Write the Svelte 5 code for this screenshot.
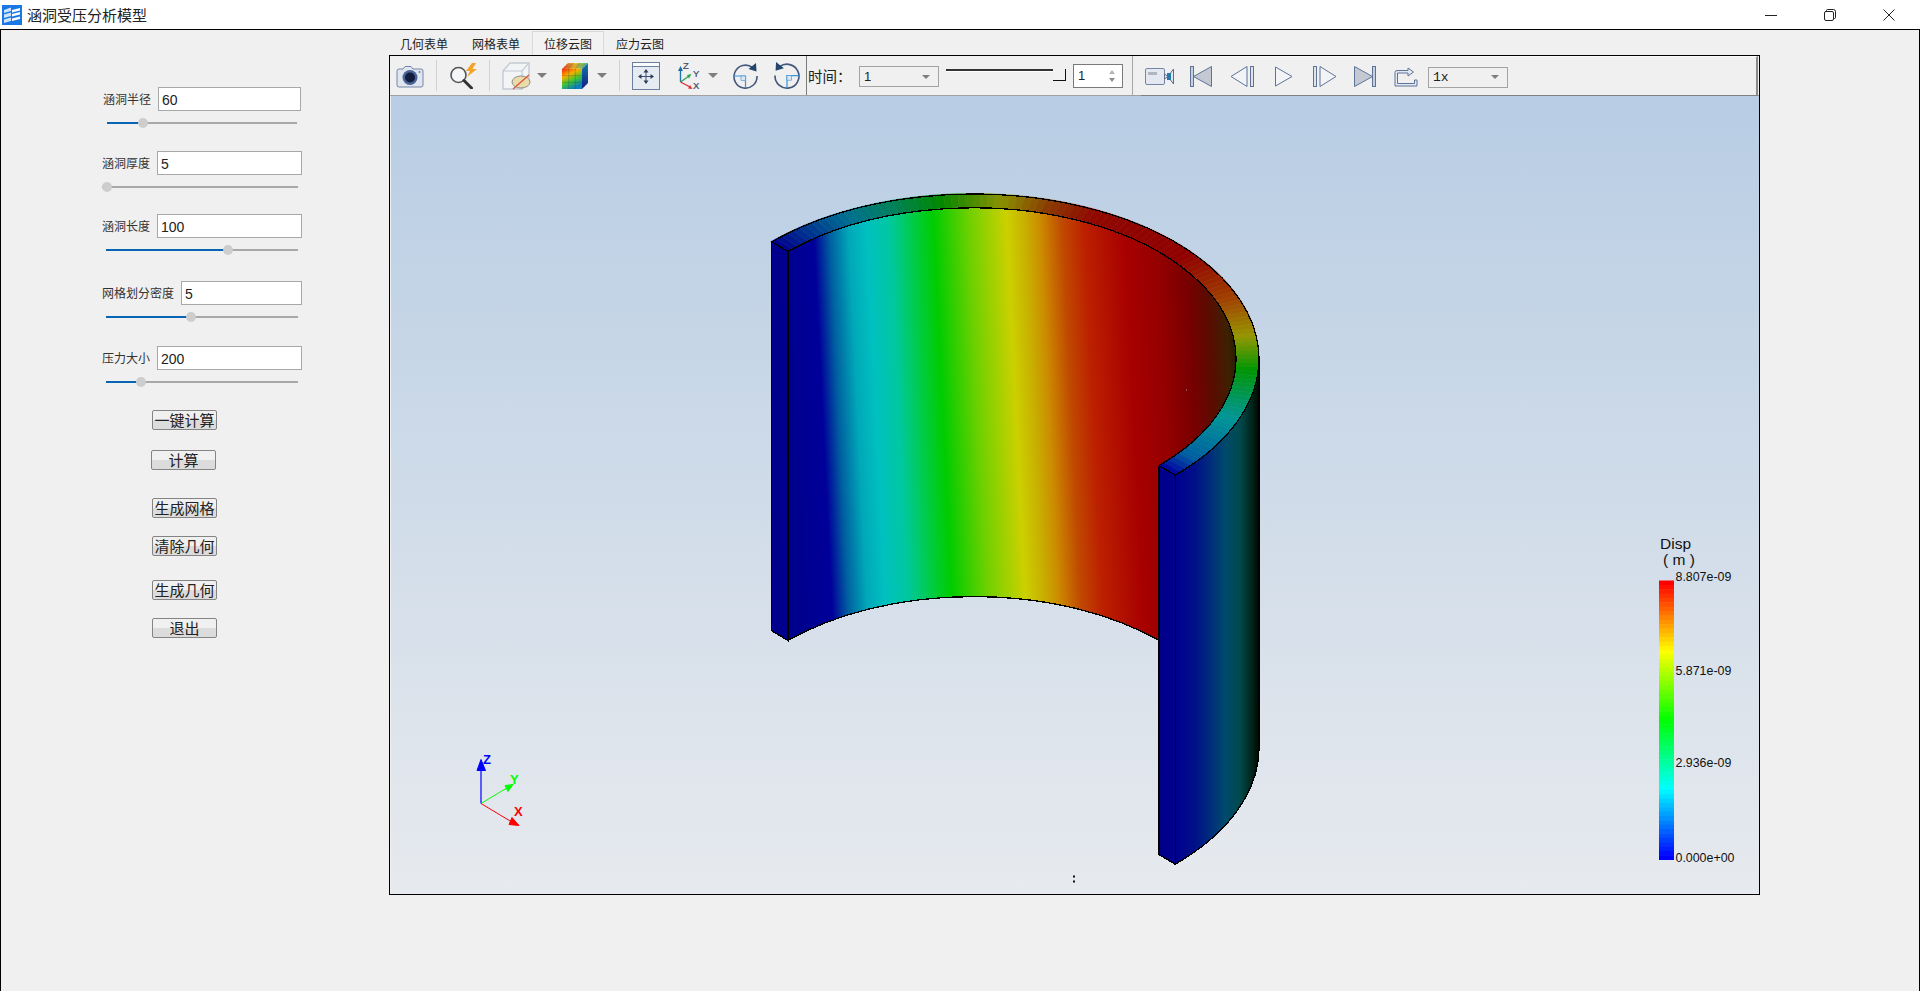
<script lang="ts">
    const fields = [
        { id: 'f1', label: '涵洞半径', value: '60', pct: 18.9 },
        { id: 'f2', label: '涵洞厚度', value: '5', pct: 2.55 },
        { id: 'f3', label: '涵洞长度', value: '100', pct: 63.5 },
        { id: 'f4', label: '网格划分密度', value: '5', pct: 44.3 },
        { id: 'f5', label: '压力大小', value: '200', pct: 18.2 }
    ]

    const buttons = [
        { id: 'b1', text: '一键计算' },
        { id: 'b2', text: '计算' },
        { id: 'b3', text: '生成网格' },
        { id: 'b4', text: '清除几何' },
        { id: 'b5', text: '生成几何' },
        { id: 'b6', text: '退出' }
    ]

    const tabs = ['几何表单', '网格表单', '位移云图', '应力云图']
    const activeTab = 2

    // model geometry, in page coordinates (the scene's viewBox starts at the viewport's corner)
    const cx = 973
    const cy = 358
    const outer = { a: 286, b: 165 }
    const inner = { a: 263, b: 151 }
    const H = 389

    // colour of the top ring against the ellipse angle
    const ringStops: [number, number[]][] = [
        [225, [0, 0, 140]],
        [235, [0, 63, 144]],
        [243, [0, 112, 144]],
        [253, [0, 128, 90]],
        [263, [0, 136, 0]],
        [276, [138, 144, 0]],
        [286, [138, 58, 0]],
        [296, [144, 8, 0]],
        [320, [144, 0, 0]],
        [338, [160, 64, 0]],
        [352, [150, 150, 0]],
        [364, [0, 150, 0]],
        [375, [0, 150, 96]],
        [382, [0, 150, 150]],
        [398, [0, 96, 160]],
        [405, [0, 0, 160]]
    ]

    function ringColor(t: number) {
        for (let i = 1; i < ringStops.length; i++) {
            const [t0, c0] = ringStops[i - 1]
            const [t1, c1] = ringStops[i]
            if (t <= t1) {
                const k = (t - t0) / (t1 - t0)
                return `rgb(${c0.map((v, j) => Math.round(v + (c1[j] - v) * k)).join(',')})`
            }
        }
        return 'rgb(0,0,160)'
    }

    function pt(e: { a: number; b: number }, t: number) {
        const r = (t * Math.PI) / 180
        return `${(cx + e.a * Math.cos(r)).toFixed(1)},${(cy + e.b * Math.sin(r)).toFixed(1)}`
    }

    const ringSegments: { points: string; color: string }[] = []
    for (let t = 225; t < 405; t += 1.5) {
        ringSegments.push({
            points: [pt(outer, t), pt(outer, t + 1.5), pt(inner, t + 1.5), pt(inner, t)].join(' '),
            color: ringColor(t + 0.75)
        })
    }

    // wall colours are keyed by screen x
    const wallStops: [number, string][] = [
        [788, '#00008f'],
        [817, '#00009a'],
        [833, '#0060a0'],
        [852, '#00a8b8'],
        [870, '#00c0c0'],
        [893, '#00c8a0'],
        [918, '#00cc40'],
        [937, '#00cc00'],
        [973, '#70d000'],
        [1010, '#ccd000'],
        [1028, '#c8b000'],
        [1043, '#cc8c00'],
        [1065, '#c04a00'],
        [1087, '#bc2000'],
        [1127, '#a80000'],
        [1160, '#940000'],
        [1187, '#780000'],
        [1207, '#5a0c00'],
        [1225, '#3c2200'],
        [1236, '#201a08']
    ]
    const outerStops: [number, string][] = [
        [1175, '#00008f'],
        [1195, '#001088'],
        [1210, '#002c7c'],
        [1225, '#004a6c'],
        [1240, '#004a4c'],
        [1252, '#00241a'],
        [1259, '#000800']
    ]
    const offset = (x: number, x0: number, x1: number) => ((x - x0) / (x1 - x0)).toFixed(4)

    // colour bar: 64 steps from red at the top down to blue
    const barTop = 580
    const barHeight = 279
    const bands = Array.from({ length: 64 }, (_, i) => ({
        y: barTop + (i * barHeight) / 64,
        color: `hsl(${(i / 63) * 240}, 100%, 50%)`
    }))
    const barLabels = [
        { y: 580, text: '8.807e-09' },
        { y: 674, text: '5.871e-09' },
        { y: 766, text: '2.936e-09' },
        { y: 861, text: '0.000e+00' }
    ]

    const outerBottomY = cy + H
</script>

<div class="app">
    <header class="titlebar">
        <svg class="app-icon" viewBox="0 0 20 20">
            <rect width="20" height="20" fill="#1a78e6" />
            <path d="M2 5 L9 2.5 V6 L2 8 Z M2 9.5 L9 7.5 V11 L2 13 Z M2 14.5 L9 12.5 V16 L2 18 Z" fill="#cfe3fa" />
            <path d="M10 5 L18 3 V5.5 L10 7.5 Z M10 9 L18 7 V9.5 L10 11.5 Z M10 13.5 L18 11.5 V14 L10 16 Z" fill="#fff" />
        </svg>
        <span class="title">涵洞受压分析模型</span>
        <div class="win-controls">
            <svg viewBox="0 0 12 12"><path d="M0 6.5 H12" stroke="#222" fill="none" /></svg>
            <svg viewBox="0 0 12 12"><path d="M2.5 2.5 V1.5 Q2.5 .5 3.5 .5 H9.5 Q11.5 .5 11.5 2.5 V8.5 Q11.5 9.5 10.5 9.5 H9.5 M1.5 2.5 H8 Q9.5 2.5 9.5 4 V10 Q9.5 11.5 8 11.5 H2 Q.5 11.5 .5 10 V4 Q.5 2.5 2 2.5 Z" stroke="#222" fill="none" /></svg>
            <svg viewBox="0 0 12 12"><path d="M.5 .5 L11.5 11.5 M11.5 .5 L.5 11.5" stroke="#222" fill="none" /></svg>
        </div>
    </header>

    <div class="body">
        <aside class="side">
            {#each fields as f}
                <div class="field {f.id}">
                    <div class="field-row">
                        <label for={f.id}>{f.label}</label>
                        <input id={f.id} value={f.value} />
                    </div>
                    <div class="slider">
                        <div class="fill" style="width: {f.pct}%"></div>
                        <div class="thumb" style="left: {f.pct}%"></div>
                    </div>
                </div>
            {/each}
            <div class="buttons">
                {#each buttons as b}
                    <button class={b.id}>{b.text}</button>
                {/each}
            </div>
        </aside>

        <main class="main">
            <nav class="tabs">
                {#each tabs as t, i}
                    <span class="tab" class:active={i === activeTab}>{t}</span>
                {/each}
            </nav>

            <section class="frame">
                <div class="toolbar">
                    <!-- camera -->
                    <svg class="ic w28" viewBox="0 0 28 24">
                        <path d="M3 5 H7 L9 2.5 H15 L17 5 H25 Q27 5 27 7 V21 Q27 23 25 23 H3 Q1 23 1 21 V7 Q1 5 3 5 Z" fill="#dfe6f0" stroke="#7486a8" />
                        <circle cx="14" cy="13.5" r="7.5" fill="#4a6494" />
                        <circle cx="14" cy="13.5" r="5" fill="#121d3e" />
                        <circle cx="23.5" cy="8" r="1" fill="#6a7c9e" />
                    </svg>
                    <i class="sep ml12"></i>
                    <!-- magnifier with flash -->
                    <svg class="ic w29 ml12" viewBox="0 0 29 27">
                        <circle cx="9.5" cy="13" r="7.5" fill="#f4f6f8" stroke="#555" stroke-width="1.6" />
                        <path d="M15 18.5 L22.5 26" stroke="#333" stroke-width="3" stroke-linecap="round" />
                        <path d="M23 1 L17 9 L21 9 L18 15 L28 7 L23.5 7 L27 1 Z" fill="#f0a428" />
                    </svg>
                    <i class="sep ml11"></i>
                    <!-- box with clipped ellipse -->
                    <svg class="ic w29 ml12" viewBox="0 0 29 28">
                        <path d="M1 9 L8 1 H27 V18 L20 27 H1 Z" fill="#f3f4f6" stroke="#c4cad3" stroke-width="1.4" />
                        <path d="M1 9 H20 L27 1 M20 9 V27" fill="none" stroke="#c4cad3" stroke-width="1.2" />
                        <ellipse cx="19" cy="20" rx="9" ry="6" fill="#e9dca8" stroke="#8d8d8d" />
                        <path d="M11 27 L27 13" stroke="#d9583a" stroke-width="1.4" />
                    </svg>
                    <svg class="arrow ml6" viewBox="0 0 10 5"><path d="M0 0 H10 L5 5 Z" /></svg>
                    <!-- colour cube -->
                    <svg class="ic w27 ml14" viewBox="0 0 27 28">
                        <defs>
                            <linearGradient id="cubeFront" x1="0" y1="0" x2="0.5" y2="1">
                                <stop offset="0" stop-color="#f02810" />
                                <stop offset=".35" stop-color="#f8b000" />
                                <stop offset=".65" stop-color="#40c830" />
                                <stop offset="1" stop-color="#0c80b8" />
                            </linearGradient>
                            <linearGradient id="cubeTop" x1="0" y1="0" x2="1" y2="0">
                                <stop offset="0" stop-color="#f04020" />
                                <stop offset=".5" stop-color="#f0c030" />
                                <stop offset="1" stop-color="#38c090" />
                            </linearGradient>
                            <linearGradient id="cubeSide" x1="0" y1="0" x2="0" y2="1">
                                <stop offset="0" stop-color="#1080c0" />
                                <stop offset="1" stop-color="#0a1c88" />
                            </linearGradient>
                        </defs>
                        <path d="M1 7 L7 1 H27 L21 7 Z" fill="url(#cubeTop)" />
                        <rect x="1" y="7" width="20" height="20" fill="url(#cubeFront)" />
                        <path d="M21 7 L27 1 V21 L21 27 Z" fill="url(#cubeSide)" />
                        <path d="M7.7 7 V27 M14.3 7 V27 M1 13.7 H21 M1 20.3 H21 M7 7 L12 1 M14 7 L19 1 M3 5 H23 M5 3 H25 M23 5 V25 M25 3 V23" stroke="#303030" stroke-opacity=".35" stroke-width=".7" fill="none" />
                    </svg>
                    <svg class="arrow ml9" viewBox="0 0 10 5"><path d="M0 0 H10 L5 5 Z" /></svg>
                    <i class="sep ml12"></i>
                    <!-- fit view -->
                    <svg class="ic w28 ml12" viewBox="0 0 28 28">
                        <rect x=".5" y=".5" width="27" height="27" fill="#e6ebf2" stroke="#6c7fa0" />
                        <rect x=".5" y=".5" width="27" height="4" fill="#fafbfc" stroke="#6c7fa0" />
                        <path d="M14 8 V21 M7.5 14.5 H20.5" stroke="#3d4f70" />
                        <path d="M14 7 L11.5 10.5 H16.5 Z M14 22 L11.5 18.5 H16.5 Z M6 14.5 L9.5 12 V17 Z M22 14.5 L18.5 12 V17 Z" fill="#2c3c5c" />
                    </svg>
                    <!-- axes -->
                    <svg class="ic w22 ml18" viewBox="0 0 22 30">
                        <path d="M2.5 21 V9" stroke="#1f7aa8" stroke-width="1.4" />
                        <path d="M2.5 21 L11 15" stroke="#2aa850" stroke-width="1.4" />
                        <path d="M2.5 21 L12 26" stroke="#e03030" stroke-width="1.4" />
                        <path d="M2.5 5 L0 10 H5 Z" fill="#1f6aa8" />
                        <path d="M13.5 13 L9 14 L11 17.5 Z" fill="#2aa850" />
                        <path d="M14.5 28 L10 27.5 L12 24 Z" fill="#e03030" />
                        <text class="axis-text" x="5" y="7.5">Z</text>
                        <text class="axis-text" x="15" y="15.5">Y</text>
                        <text class="axis-text" x="15" y="28">X</text>
                    </svg>
                    <svg class="arrow ml8" viewBox="0 0 10 5"><path d="M0 0 H10 L5 5 Z" /></svg>
                    <!-- rotate clockwise -->
                    <svg class="ic w25 ml15" viewBox="0 0 25 26">
                        <path d="M19.5 4.5 A11.5 11.5 0 1 0 24 13" fill="none" stroke="#44597c" stroke-width="1.6" />
                        <path d="M1 13 H12.5 V25" fill="none" stroke="#3a94d8" stroke-width="1.2" />
                        <rect x="8" y="13" width="4.5" height="4.5" fill="#dbe7f3" stroke="#3a94d8" stroke-width=".6" />
                        <path d="M23 0 L23.5 8.5 L15.5 6 Z" fill="#24466e" />
                    </svg>
                    <!-- rotate counter clockwise -->
                    <svg class="ic w26 ml16" viewBox="0 0 25 26">
                        <path d="M5.5 4.5 A11.5 11.5 0 1 1 1 13" fill="none" stroke="#44597c" stroke-width="1.6" />
                        <path d="M24 13 H12.5 V25" fill="none" stroke="#3a94d8" stroke-width="1.2" />
                        <rect x="12.5" y="13" width="4.5" height="4.5" fill="#dbe7f3" stroke="#3a94d8" stroke-width=".6" />
                        <path d="M2 0 L1.5 8.5 L9.5 6 Z" fill="#24466e" />
                    </svg>
                    <i class="sep dark ml6"></i>
                    <span class="time-label">时间：</span>
                    <div class="combo wide"><span>1</span><svg class="arrow small" viewBox="0 0 10 5"><path d="M0 0 H10 L5 5 Z" /></svg></div>
                    <div class="time-slider"><div class="time-handle"></div></div>
                    <div class="spin">
                        <span>1</span>
                        <svg viewBox="0 0 6 14"><path d="M0 5 L3 1 L6 5 Z" fill="#b4b4b4" /><path d="M0 9 H6 L3 13 Z" fill="#8c8c8c" /></svg>
                    </div>
                    <i class="sep grey ml9"></i>
                    <div class="player">
                        <!-- video camera -->
                        <svg class="w29" viewBox="0 0 29 17">
                            <rect x=".5" y=".5" width="19" height="16" rx="1.5" fill="#e4e9f1" stroke="#7486a8" />
                            <rect x="3" y="4" width="9" height="3" fill="#b0b6c0" />
                            <path d="M19.5 6 L23 8.5 L19.5 11 Z M28.5 1 L23 8.5 L28.5 16 Z" fill="#dfe6ee" stroke="#5a6f92" />
                            <path d="M22 5 H26 V12 H22 Z" fill="#2a78a8" />
                        </svg>
                        <!-- first -->
                        <svg class="w22 ml16" viewBox="0 0 22 21">
                            <rect x=".5" y=".5" width="3" height="20" fill="#c8d0dd" stroke="#5e7398" />
                            <path d="M3.5 10.5 L21.5 .5 V20.5 Z" fill="#c4c9d1" stroke="#5e7398" />
                        </svg>
                        <!-- previous -->
                        <svg class="w24 ml18" viewBox="0 0 24 21">
                            <path d="M1 10.5 L17 .5 V20.5 Z" fill="#f2f4f7" stroke="#5e7398" />
                            <rect x="20.5" y=".5" width="3" height="20" fill="#dfe4ec" stroke="#5e7398" />
                        </svg>
                        <!-- play -->
                        <svg class="w18 ml21" viewBox="0 0 18 21">
                            <path d="M.5 1 L17 10.5 L.5 20 Z" fill="#f2f4f7" stroke="#5e7398" />
                        </svg>
                        <!-- next -->
                        <svg class="w24 ml20" viewBox="0 0 24 21">
                            <rect x=".5" y=".5" width="3" height="20" fill="#dfe4ec" stroke="#5e7398" />
                            <path d="M7 .5 L23 10.5 L7 20.5 Z" fill="#f2f4f7" stroke="#5e7398" />
                        </svg>
                        <!-- last -->
                        <svg class="w22 ml17" viewBox="0 0 22 21">
                            <path d="M.5 .5 L18.5 10.5 L.5 20.5 Z" fill="#c4c9d1" stroke="#5e7398" />
                            <rect x="18.5" y=".5" width="3" height="20" fill="#c8d0dd" stroke="#5e7398" />
                        </svg>
                        <!-- export -->
                        <svg class="w24 ml18" viewBox="0 0 24 21">
                            <path d="M14 2 V4.5 H3 Q1 4.5 1 6.5 V20 H23 V14 H20.5 V17.5 H3.5 V7 H14 V10 L19.5 6 Z" fill="#e4e9f1" stroke="#5e7398" />
                        </svg>
                        <div class="combo wide ml10 mono"><span>1x</span><svg class="arrow small" viewBox="0 0 10 5"><path d="M0 0 H10 L5 5 Z" /></svg></div>
                    </div>
                </div>

                <div class="viewport">
                    <svg class="scene" viewBox="391 96 1368 797">
                        <defs>
                            <linearGradient id="wall" gradientUnits="userSpaceOnUse" x1="788" y1="300" x2="1236" y2="278">
                                {#each wallStops as [x, c]}
                                    <stop offset={offset(x, 788, 1236)} stop-color={c} />
                                {/each}
                            </linearGradient>
                            <linearGradient id="outerWall" gradientUnits="userSpaceOnUse" x1="1175" y1="0" x2="1259" y2="0">
                                {#each outerStops as [x, c]}
                                    <stop offset={offset(x, 1175, 1259)} stop-color={c} />
                                {/each}
                            </linearGradient>
                        </defs>

                        <!-- model -->
                        <path
                            d="M788 251 A{inner.a} {inner.b} 0 0 1 1236 {cy} A{inner.a} {inner.b} 0 0 1 1159 465 V640 A{inner.a} {inner.b} 0 0 0 788 640 Z"
                            fill="url(#wall)"
                        />
                        <path
                            d="M1175.2 474.7 A{outer.a} {outer.b} 0 0 0 1259 {cy} V{outerBottomY} A{outer.a} {outer.b} 0 0 1 1175.2 863.7 Z"
                            fill="url(#outerWall)"
                        />
                        <path d="M771.8 241.3 L788 251 V640 L771.8 630.3 Z" fill="#00008c" />
                        <path d="M1159 465 L1175.2 474.7 V863.7 L1159 854 Z" fill="#00008c" />
                        {#each ringSegments as s}
                            <polygon points={s.points} fill={s.color} stroke={s.color} stroke-width=".6" />
                        {/each}

                        <g class="edges">
                            <path d="M771.8 241.3 A{outer.a} {outer.b} 0 0 1 1259 {cy} A{outer.a} {outer.b} 0 0 1 1175.2 474.7 L1159 465" />
                            <path d="M788 251 A{inner.a} {inner.b} 0 0 1 1236 {cy} A{inner.a} {inner.b} 0 0 1 1159 465" />
                            <path d="M771.8 241.3 L788 251 V640 L771.8 630.3 Z" />
                            <path d="M1159 465 V854 L1175.2 863.7 V474.7" />
                            <path d="M1159 640 A{inner.a} {inner.b} 0 0 0 788 640" />
                            <path d="M1259 {cy} V{outerBottomY} A{outer.a} {outer.b} 0 0 1 1175.2 863.7" />
                        </g>
                        <rect x="1186" y="389" width="1" height="1" fill="#9a9a9a" />

                        <!-- orientation triad -->
                        <path d="M481 803 V769" stroke="#0000ff" stroke-width="1.2" />
                        <path d="M481 803 L506 788" stroke="#00ff00" />
                        <path d="M481 803 L511 821" stroke="#ff0000" />
                        <path d="M481 759 L485.5 770 H477 Z" fill="#0000ff" stroke="#0000ff" />
                        <path d="M513 784 L505 785 L508 791 Z" fill="#00ff00" stroke="#00ff00" />
                        <path d="M519 825 L509 824 L512 817 Z" fill="#ff0000" stroke="#ff0000" />
                        <text class="triad" x="483" y="763" fill="#0000ff">Z</text>
                        <text class="triad" x="510" y="783" fill="#00ff00">Y</text>
                        <text class="triad" x="514" y="815" fill="#ff0000">X</text>

                        <!-- colour bar -->
                        {#each bands as band}
                            <rect x="1659" y={band.y} width="15" height={barHeight / 64 + 0.5} fill={band.color} />
                        {/each}
                        <text class="bar-title" x="1660" y="548">Disp</text>
                        <text class="bar-title" x="1663" y="564" xml:space="preserve">( m )</text>
                        {#each barLabels as l}
                            <text class="bar-label" x="1675.5" y={l.y}>{l.text}</text>
                        {/each}

                        <rect x="1073" y="875" width="2" height="2" fill="#111" />
                        <rect x="1073" y="880" width="2" height="2" fill="#111" />
                    </svg>
                </div>
            </section>
        </main>
    </div>
</div>

<style>
    :global(body) {
        margin: 0;
        background: #f0f0f0;
    }

    .app {
        height: 991px;
        display: flex;
        flex-direction: column;
        overflow: hidden;
        font-family: 'Noto Sans CJK SC', 'Liberation Sans', sans-serif;
        color: #222;
    }

    .titlebar {
        height: 29px;
        flex: none;
        display: flex;
        align-items: center;
        background: #fff;
        padding-left: 2px;
    }

    .app-icon {
        width: 20px;
        height: 20px;
    }

    .title {
        margin-left: 5px;
        font-size: 15px;
        line-height: 20px;
    }

    .win-controls {
        margin-left: auto;
        display: flex;
        gap: 47px;
        padding-right: 25px;
    }

    .win-controls svg {
        width: 12px;
        height: 12px;
    }

    .body {
        flex: 1;
        display: flex;
        border: 1px solid #000;
        border-bottom: 0;
        background: #f0f0f0;
        min-height: 0;
    }

    .side {
        width: 387px;
        flex: none;
        padding-top: 57px;
        box-sizing: border-box;
    }

    .field {
        display: flex;
        flex-direction: column;
        margin-left: 101px;
        width: 200px;
    }

    .f1 {
        margin-left: 102px;
        width: 198px;
        margin-bottom: 16px;
    }
    .f2 { margin-bottom: 15px; }
    .f3 { margin-bottom: 19px; }
    .f4 { margin-bottom: 17px; }
    .f5 { margin-bottom: 16px; }

    .field-row {
        display: flex;
        align-items: center;
        gap: 7px;
        height: 24px;
    }

    label {
        font-size: 12px;
        line-height: 24px;
        color: #333;
        white-space: nowrap;
    }

    input {
        flex: 1;
        min-width: 0;
        height: 24px;
        box-sizing: border-box;
        border: 1px solid #a8a8a8;
        background: #fff;
        padding: 1px 3px 0;
        font: 14px 'Liberation Sans', sans-serif;
        color: #222;
        outline: none;
    }

    .slider {
        position: relative;
        height: 2px;
        margin: 11px 4px 11px 4px;
        background: #a8a8a8;
    }

    .f2 .slider {
        margin-left: 0;
    }

    .fill {
        height: 100%;
        background: #0a64b4;
    }

    .thumb {
        position: absolute;
        top: -4px;
        width: 10px;
        height: 10px;
        margin-left: -5px;
        border-radius: 50%;
        background: #cdcdcd;
    }

    .buttons {
        display: flex;
        flex-direction: column;
        align-items: flex-start;
        margin-left: 151px;
    }

    button {
        width: 65px;
        height: 20px;
        padding: 0;
        box-sizing: border-box;
        border: 1px solid #848484;
        border-radius: 2px;
        background: linear-gradient(to bottom, #f0f0f0 50%, #dcdcdc 50%);
        font: 15px/18px 'Noto Sans CJK SC', sans-serif;
        color: #222;
        white-space: nowrap;
    }

    .b2 { margin: 20px 0 0 -1px; }
    .b3 { margin-top: 28px; }
    .b4 { margin-top: 18px; }
    .b5 { margin-top: 24px; }
    .b6 { margin-top: 18px; }

    .main {
        width: 1372px;
        flex: none;
        display: flex;
        flex-direction: column;
    }

    .tabs {
        height: 25px;
        flex: none;
        display: flex;
    }

    .tab {
        width: 72px;
        box-sizing: border-box;
        margin-top: 1px;
        padding-left: 12px;
        font-size: 12px;
        line-height: 26px;
        color: #222;
    }

    .tab.active {
        border: 1px solid #d9d9d9;
        border-bottom: 0;
        background: #f2f2f2;
        padding-left: 11px;
        line-height: 24px;
    }

    .frame {
        margin-left: 1px;
        height: 840px;
        box-sizing: border-box;
        border: 1px solid #000;
        display: flex;
        flex-direction: column;
        background: #f0f0f0;
    }

    .toolbar {
        height: 40px;
        flex: none;
        box-sizing: border-box;
        display: flex;
        align-items: center;
        padding-left: 6px;
        border-bottom: 1px solid #a0a0a0;
    }

    .ic {
        flex: none;
    }

    .w18 { width: 18px; }
    .w22 { width: 22px; }
    .w24 { width: 24px; }
    .w25 { width: 25px; }
    .w26 { width: 26px; }
    .w27 { width: 27px; }
    .w28 { width: 28px; }
    .w29 { width: 29px; }
    .ml6 { margin-left: 6px; }
    .ml8 { margin-left: 8px; }
    .ml9 { margin-left: 9px; }
    .ml10 { margin-left: 10px; }
    .ml11 { margin-left: 11px; }
    .ml12 { margin-left: 12px; }
    .ml14 { margin-left: 14px; }
    .ml15 { margin-left: 15px; }
    .ml16 { margin-left: 16px; }
    .ml17 { margin-left: 17px; }
    .ml18 { margin-left: 18px; }
    .ml20 { margin-left: 20px; }
    .ml21 { margin-left: 21px; }

    .sep {
        flex: none;
        width: 1px;
        height: 31px;
        background: #d2d2d2;
    }

    .sep.dark {
        height: 39px;
        background: #7c7c7c;
    }

    .sep.grey {
        height: 39px;
        background: #a6a6a6;
    }

    .arrow {
        flex: none;
        width: 10px;
        height: 5px;
        fill: #7e7e7e;
    }

    .axis-text {
        font: 9.5px 'Liberation Sans', sans-serif;
        fill: #3a4a62;
        stroke: #3a4a62;
        stroke-width: 0.2;
    }

    .time-label {
        margin-left: 1px;
        width: 51px;
        flex: none;
        font-size: 14.5px;
        white-space: nowrap;
    }

    .combo {
        flex: none;
        height: 21px;
        box-sizing: border-box;
        border: 1px solid #a4a4a4;
        display: flex;
        align-items: center;
        justify-content: space-between;
        padding: 0 8px 0 4px;
        font: 13px 'Liberation Sans', sans-serif;
        margin-top: 2px;
    }

    .combo.wide {
        width: 80px;
    }

    .combo.mono {
        font-family: 'Liberation Mono', monospace;
    }

    .small {
        width: 8px;
        height: 4px;
    }

    .time-slider {
        position: relative;
        flex: none;
        width: 120px;
        height: 2px;
        margin: -11px 0 0 7px;
        background: #333;
        border-bottom: 1px solid #fff;
    }

    .time-handle {
        position: absolute;
        right: 0;
        top: 0;
        width: 12px;
        height: 11px;
        background: #f2f2f2;
        border-right: 1px solid #111;
        border-bottom: 1px solid #111;
    }

    .spin {
        flex: none;
        width: 50px;
        height: 24px;
        margin-left: 7px;
        box-sizing: border-box;
        border: 1px solid #7a7a7a;
        background: #fff;
        display: flex;
        align-items: center;
        justify-content: space-between;
        padding: 0 7px 0 4px;
        font: 13px 'Liberation Sans', sans-serif;
    }

    .spin svg {
        width: 6px;
        height: 14px;
    }

    .player {
        flex: 1;
        align-self: stretch;
        display: flex;
        align-items: center;
        margin-left: 8px;
        margin-right: 1px;
        padding-left: 4px;
        border-right: 2px solid #8a8a8a;
        border-top: 1px solid #fafafa;
        border-bottom: 1px solid #808080;
        margin-bottom: -1px;
    }

    .player svg {
        flex: none;
    }

    .viewport {
        position: relative;
        flex: 1;
        min-height: 0;
        margin-left: 1px;
        background: linear-gradient(to bottom, #b8cde4, #e7eaee);
    }

    .scene {
        position: absolute;
        inset: 0;
        width: 100%;
        height: 100%;
    }

    .edges {
        fill: none;
        stroke: #000;
        stroke-width: 1.3;
        shape-rendering: crispEdges;
    }

    .triad {
        font: bold 13px 'Liberation Sans', sans-serif;
    }

    .bar-title {
        font: 15.5px 'Liberation Sans', sans-serif;
        fill: #111;
    }

    .bar-label {
        font: 12.4px 'Liberation Sans', sans-serif;
        fill: #111;
    }
</style>
